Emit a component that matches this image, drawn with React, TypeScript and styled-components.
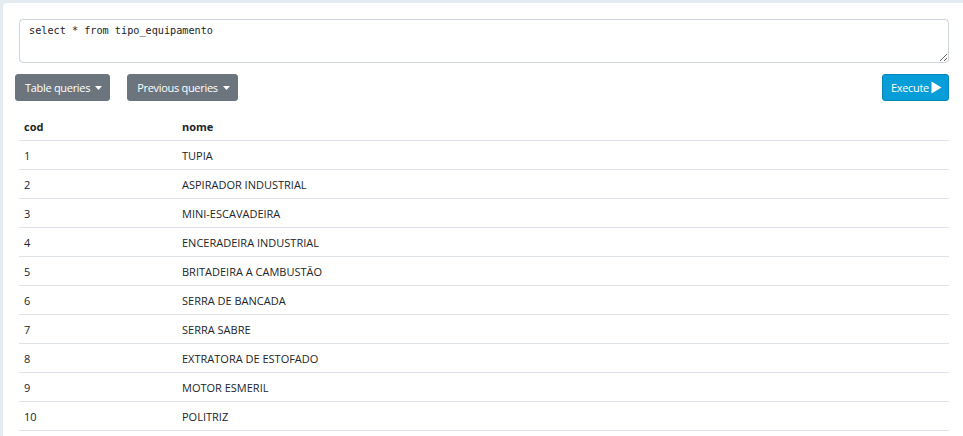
import React, { ReactElement } from 'react';
import styled, { createGlobalStyle } from 'styled-components';

const GlobalStyle = createGlobalStyle`
  html, body {
    margin: 0;
    padding: 0;
    background: #e4ebf1;
    font-family: "Open Sans", "Noto Sans", sans-serif;
    color: #212529;
  }
`;

const rows: [number, string][] = [
  [1, 'TUPIA'],
  [2, 'ASPIRADOR INDUSTRIAL'],
  [3, 'MINI-ESCAVADEIRA'],
  [4, 'ENCERADEIRA INDUSTRIAL'],
  [5, 'BRITADEIRA A CAMBUSTÃO'],
  [6, 'SERRA DE BANCADA'],
  [7, 'SERRA SABRE'],
  [8, 'EXTRATORA DE ESTOFADO'],
  [9, 'MOTOR ESMERIL'],
  [10, 'POLITRIZ'],
];

const Caret = (): ReactElement => (
  <svg width="7" height="4" viewBox="0 0 7 4">
    <path d="M0 0h7L3.5 4z" fill="#fff" />
  </svg>
);

const PlayIcon = (): ReactElement => (
  <svg width="11" height="13" viewBox="0 0 11 13">
    <path d="M0.5 0.5L10.5 6.5L0.5 12.5z" fill="#fff" />
  </svg>
);

export default function App(): ReactElement {
  return (
    <>
      <GlobalStyle />
      <Page>
        <Card>
          <Editor defaultValue="select * from tipo_equipamento" spellCheck={false} />
          <Toolbar>
            <Dropdowns>
              <MenuButton>
                Table queries <Caret />
              </MenuButton>
              <MenuButton>
                Previous queries <Caret />
              </MenuButton>
            </Dropdowns>
            <ExecuteButton>
              Execute <PlayIcon />
            </ExecuteButton>
          </Toolbar>
          <Table>
            <colgroup>
              <CodColumn />
              <col />
            </colgroup>
            <thead>
              <tr>
                <HeadCell>cod</HeadCell>
                <HeadCell>nome</HeadCell>
              </tr>
            </thead>
            <tbody>
              {rows.map(([cod, nome]) => (
                <tr key={cod}>
                  <Cell>{cod}</Cell>
                  <Cell>{nome}</Cell>
                </tr>
              ))}
            </tbody>
          </Table>
        </Card>
      </Page>
    </>
  );
}

const Page = styled.div`
  padding: 3px 0 0 3px;
  min-height: 433px;
`;

const Card = styled.div`
  background: #fff;
  border-top-left-radius: 4px;
  min-height: 433px;
  padding: 16px 14px 0 16px;
  box-sizing: border-box;
`;

const Editor = styled.textarea`
  display: block;
  width: 100%;
  height: 44px;
  box-sizing: border-box;
  border: 1px solid #ced4da;
  border-radius: 4px;
  padding: 3px 9px;
  font-family: "DejaVu Sans Mono", "Liberation Mono", monospace;
  font-size: 10.2px;
  line-height: 16px;
  color: #212529;
  resize: vertical;
  outline: none;
`;

const Toolbar = styled.div`
  display: flex;
  justify-content: space-between;
  align-items: center;
  margin: 11px 0 0 -4px;
`;

const Dropdowns = styled.div`
  display: flex;
  gap: 17px;
`;

const BaseButton = styled.button`
  display: inline-flex;
  align-items: center;
  height: 27px;
  box-sizing: border-box;
  border-radius: 3px;
  font-family: "Open Sans", "Noto Sans", sans-serif;
  font-size: 11px;
  color: #fff;
  cursor: pointer;
  letter-spacing: -0.3px;
`;

const MenuButton = styled(BaseButton)`
  background: #6c757d;
  border: 1px solid #6c757d;
  padding: 0 7px 0 9px;
  gap: 5px;
`;

const ExecuteButton = styled(BaseButton)`
  background: #069dd8;
  border: 1px solid #0587bb;
  padding: 0 6px 0 8px;
  gap: 2px;
`;

const Table = styled.table`
  width: 100%;
  table-layout: fixed;
  margin: 11px 0 0 0;
  border-collapse: collapse;
  font-size: 11px;
`;

const CodColumn = styled.col`
  width: 158px;
`;

const HeadCell = styled.th`
  text-align: left;
  font-weight: 700;
  height: 28px;
  padding: 0 5px;
  border-bottom: 1px solid #dee2e6;
`;

const Cell = styled.td`
  height: 28px;
  padding: 0 5px;
  border-bottom: 1px solid #dee2e6;
`;
